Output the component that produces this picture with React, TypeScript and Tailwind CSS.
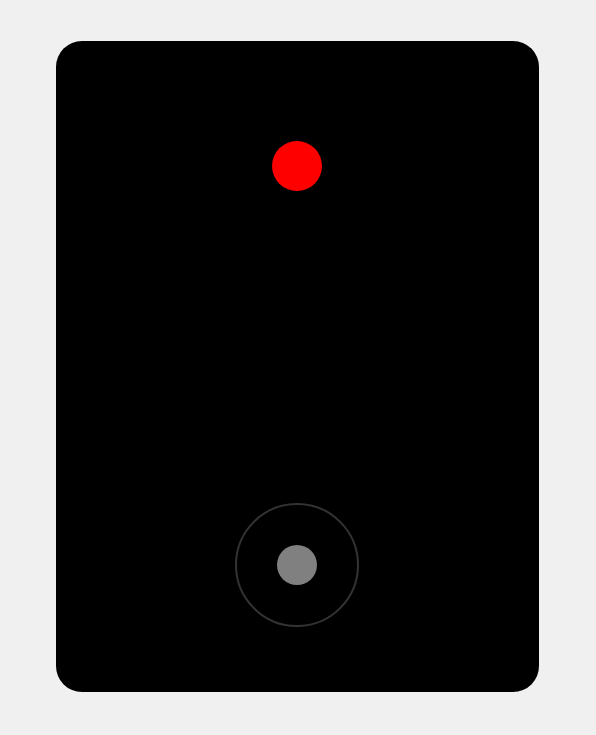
import React from "react";

const App: React.FC = () => {
  return (
    <div className="min-h-screen w-full bg-[#f0f0f0] flex pl-[56px] pt-[41px]">
      {/* game card */}
      <div className="w-[483px] h-[651px] bg-black rounded-[26px] flex flex-col items-center justify-between pt-[100px] pb-[65px] pr-[1px]">
        {/* target */}
        <div className="w-[50px] h-[50px] rounded-full bg-[#ff0000]" />

        {/* joystick */}
        <div className="w-[124px] h-[124px] rounded-full border-2 border-[#333333] flex items-center justify-center">
          <div className="w-[40px] h-[40px] rounded-full bg-[#808080]" />
        </div>
      </div>
    </div>
  );
};

export default App;
